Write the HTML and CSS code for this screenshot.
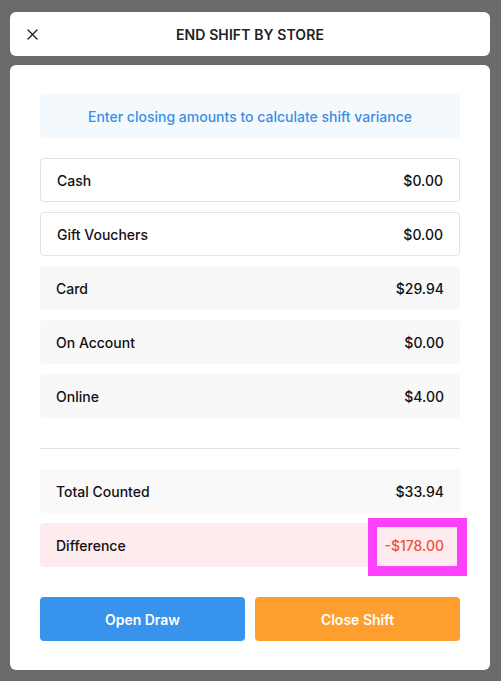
FILE: index.html
```html
<!DOCTYPE html>
<html lang="en">
<head>
  <meta charset="UTF-8" />
  <meta name="viewport" content="width=device-width, initial-scale=1" />
  <title>End Shift By Store</title>
  <link rel="stylesheet" href="styles.css">
</head>
<body>

  <!-- TOP BAR -->
  <header class="modal-head">
    <button class="close-btn" aria-label="Close">
      <svg width="11" height="11" viewBox="0 0 11 11">
        <path d="M1 1 L10 10 M10 1 L1 10" stroke="#222" stroke-width="1.4" stroke-linecap="round" fill="none" />
      </svg>
    </button>
    <h1>END SHIFT BY STORE</h1>
    <span></span>
  </header>

  <!-- BODY -->
  <main class="modal-body">
    <p class="hint">Enter closing amounts to calculate shift variance</p>

    <div class="rows">
      <div class="row input"><span>Cash</span><span>$0.00</span></div>
      <div class="row input"><span>Gift Vouchers</span><span>$0.00</span></div>
      <div class="row"><span>Card</span><span>$29.94</span></div>
      <div class="row"><span>On Account</span><span>$0.00</span></div>
      <div class="row"><span>Online</span><span>$4.00</span></div>
    </div>

    <hr class="divider" />

    <div class="rows">
      <div class="row total"><span>Total Counted</span><span>$33.94</span></div>
      <div class="row diff"><span>Difference</span><span class="neg">-$178.00</span></div>
    </div>

    <div class="actions">
      <button class="btn blue">Open Draw</button>
      <button class="btn orange">Close Shift</button>
    </div>
  </main>

</body>
</html>
```

FILE: styles.css
```css
*, *::before, *::after {
  box-sizing: border-box;
}
body {
  margin: 0;
  padding: 12px 11px 11px 10px;
  font-family: 'Inter', 'Noto Sans', sans-serif;
  font-size: 14px;
  color: #111;
  background: #6b6b6b;
}

/* header card */
.modal-head {
  display: grid;
  grid-template-columns: 1fr auto 1fr;
  align-items: center;
  height: 44px;
  background: #fff;
  border-radius: 6px;
  margin-bottom: 9px;
}
.close-btn {
  justify-self: start;
  display: flex;
  align-items: center;
  justify-content: center;
  width: 20px;
  height: 20px;
  margin-left: 12px;
  padding: 0;
  border: none;
  background: none;
}
.modal-head h1 {
  margin: 0;
  font-size: 14px;
  font-weight: 600;
  color: #222;
  letter-spacing: 0.1px;
}

/* main card */
.modal-body {
  background: #fff;
  border-radius: 6px;
  padding: 29px 30px 29px;
}
.hint {
  margin: 0 0 20px;
  height: 44px;
  display: flex;
  align-items: center;
  justify-content: center;
  background: #f4f9fe;
  border-radius: 4px;
  color: #3b8fe2;
  font-weight: 500;
}

.rows {
  display: flex;
  flex-direction: column;
  gap: 10px;
}
.row {
  display: flex;
  align-items: center;
  justify-content: space-between;
  height: 44px;
  padding: 0 16px;
  background: #f8f8f8;
  border-radius: 4px;
  font-weight: 500;
}
.row.input {
  background: #fff;
  border: 1px solid #e3e3e3;
}
.row.total {
  background: #f9f9f9;
}
.row.diff {
  position: relative;
  background: #fdebed;
}
.neg {
  color: #ef5142;
}
/* highlight marker round the difference */
.row.diff::after {
  content: "";
  position: absolute;
  top: -5px;
  right: -7px;
  width: 99px;
  height: 58px;
  border: 9px solid #fd40fc;
  border-right-width: 10px;
  border-bottom-width: 10px;
}

.divider {
  border: none;
  border-top: 1px solid #e2e2e2;
  margin: 30px 0 20px;
}

.actions {
  display: flex;
  gap: 10px;
  margin-top: 30px;
}
.btn {
  flex: 1;
  height: 44px;
  border: none;
  border-radius: 4px;
  color: #fff;
  font-family: inherit;
  font-size: 14px;
  font-weight: 600;
}
.btn.blue {
  background: #3893ed;
}
.btn.orange {
  background: #fd9e2e;
}
```
